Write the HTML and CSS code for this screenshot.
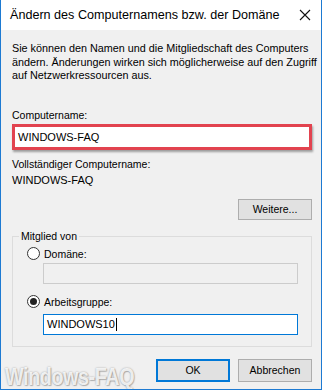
FILE: index.html
```
<!doctype html>
<html>
<head>
    <title>Ändern des Computernamens bzw. der Domäne</title>
    <link rel="stylesheet" href="styles.css">
    <meta name="viewport" content="width=device-width, initial-scale=1.0">
</head>
<body>
    <div class="window">
        <div class="titlebar">
            <span class="title">Ändern des Computernamens bzw. der Domäne</span>
            <svg class="close" width="12" height="12" viewBox="0 0 12 12">
                <path d="M1 1 L11 11 M11 1 L1 11" stroke="#111" stroke-width="1.1" fill="none"/>
            </svg>
        </div>

        <div class="content">
            <p class="intro">Sie können den Namen und die Mitgliedschaft des Computers<br>ändern. Änderungen wirken sich möglicherweise auf den Zugriff<br>auf Netzwerkressourcen aus.</p>

            <div class="label first">Computername:</div>
            <div class="highlight">
                <div class="textbox">WINDOWS-FAQ</div>
            </div>

            <div class="label">Vollständiger Computername:</div>
            <div class="value">WINDOWS-FAQ</div>

            <div class="more-row">
                <button type="button" class="btn">Weitere...</button>
            </div>

            <fieldset class="group">
                <legend>Mitglied von</legend>
                <div class="radio">
                    <span class="circle"></span>
                    <span>Domäne:</span>
                </div>
                <div class="textbox small disabled"></div>

                <div class="radio second">
                    <span class="circle checked"></span>
                    <span>Arbeitsgruppe:</span>
                </div>
                <div class="textbox small focused">WINDOWS10<span class="caret"></span></div>
            </fieldset>

            <div class="buttons">
                <button type="button" class="btn default">OK</button>
                <button type="button" class="btn">Abbrechen</button>
            </div>
        </div>

        <div class="watermark">Windows-FAQ</div>
    </div>
</body>
</html>
```
FILE: styles.css
```
body {
    margin: 0;
    padding: 0;
    background-color: #ffffff;
    font-family: "Liberation Sans", Arial, sans-serif;
    font-size: 10.5px;
    color: #000;
}
.window {
    position: relative;
    width: 320px;
    height: 389px;
    background-color: #f0f0f0;
    border: 1px solid #1d7ad2;
    border-top: none;
    overflow: hidden;
    white-space: nowrap;
}
.titlebar {
    height: 30px;
    background-color: #fff;
    display: flex;
    align-items: center;
    justify-content: space-between;
    padding: 0 10px 0 9px;
}
.title {
    font-size: 12.6px;
    color: #000;
}
.close {
    display: block;
}
.content {
    padding: 12px 9px 0 11px;
}
.intro {
    margin: 0;
    font-size: 10.8px;
    line-height: 13.5px;
}
.label {
    line-height: 16px;
}
.label.first {
    margin-top: 24px;
}
.highlight {
    border: 3px solid #e2434f;
    box-shadow: 1px 2px 2px rgba(0, 0, 0, 0.35);
    margin: 1px 0 6px 0;
}
.textbox {
    height: 20px;
    line-height: 20px;
    padding: 0 3px;
    background-color: #fff;
    font-size: 11px;
}
.value {
    line-height: 16px;
    font-size: 11px;
}
.more-row {
    display: flex;
    justify-content: flex-end;
    margin-top: 11px;
}
.btn {
    width: 74px;
    height: 21px;
    margin: 0;
    padding: 0;
    font-family: "Liberation Sans", Arial, sans-serif;
    font-size: 10.5px;
    color: #000;
    background-color: #e1e1e1;
    border: 1px solid #adadad;
}
.btn.default {
    border: 2px solid #0078d7;
}
.group {
    margin: 10px 0 0 0;
    padding: 4px 13px 11px 14px;
    border: 1px solid #dcdcdc;
}
.group legend {
    margin-left: -8px;
    padding: 0 2px;
    line-height: 13px;
}
.radio {
    display: flex;
    align-items: center;
    gap: 4px;
    height: 14px;
}
.radio.second {
    margin-top: 11px;
}
.circle {
    width: 11px;
    height: 11px;
    border: 1px solid #333;
    border-radius: 50%;
    background-color: #fff;
    display: flex;
    align-items: center;
    justify-content: center;
}
.circle.checked::after {
    content: "";
    width: 7px;
    height: 7px;
    border-radius: 50%;
    background-color: #222;
}
.textbox.small {
    margin: 2px 0 0 16px;
    height: 19px;
    line-height: 19px;
    border: 1px solid #b8b8b8;
}
.textbox.disabled {
    background-color: #f0f0f0;
    border-color: #cccccc;
}
.textbox.focused {
    margin-top: 5px;
    border-color: #0078d7;
}
.caret {
    display: inline-block;
    width: 1px;
    height: 13px;
    background-color: #000;
    vertical-align: middle;
    margin-left: 1px;
}
.buttons {
    display: flex;
    justify-content: flex-end;
    gap: 8px;
    margin-top: 12px;
}
.buttons .btn {
    height: 23px;
}
.watermark {
    position: absolute;
    left: 4px;
    bottom: -2px;
    font-family: "Liberation Sans", Arial, sans-serif;
    font-weight: bold;
    font-size: 23px;
    letter-spacing: -0.5px;
    transform: scaleX(0.86);
    transform-origin: left bottom;
    color: rgba(255, 255, 255, 0.85);
    text-shadow: 0 0 2px rgba(0, 0, 0, 0.35), 1px 1px 1px rgba(0, 0, 0, 0.2);
}
```
